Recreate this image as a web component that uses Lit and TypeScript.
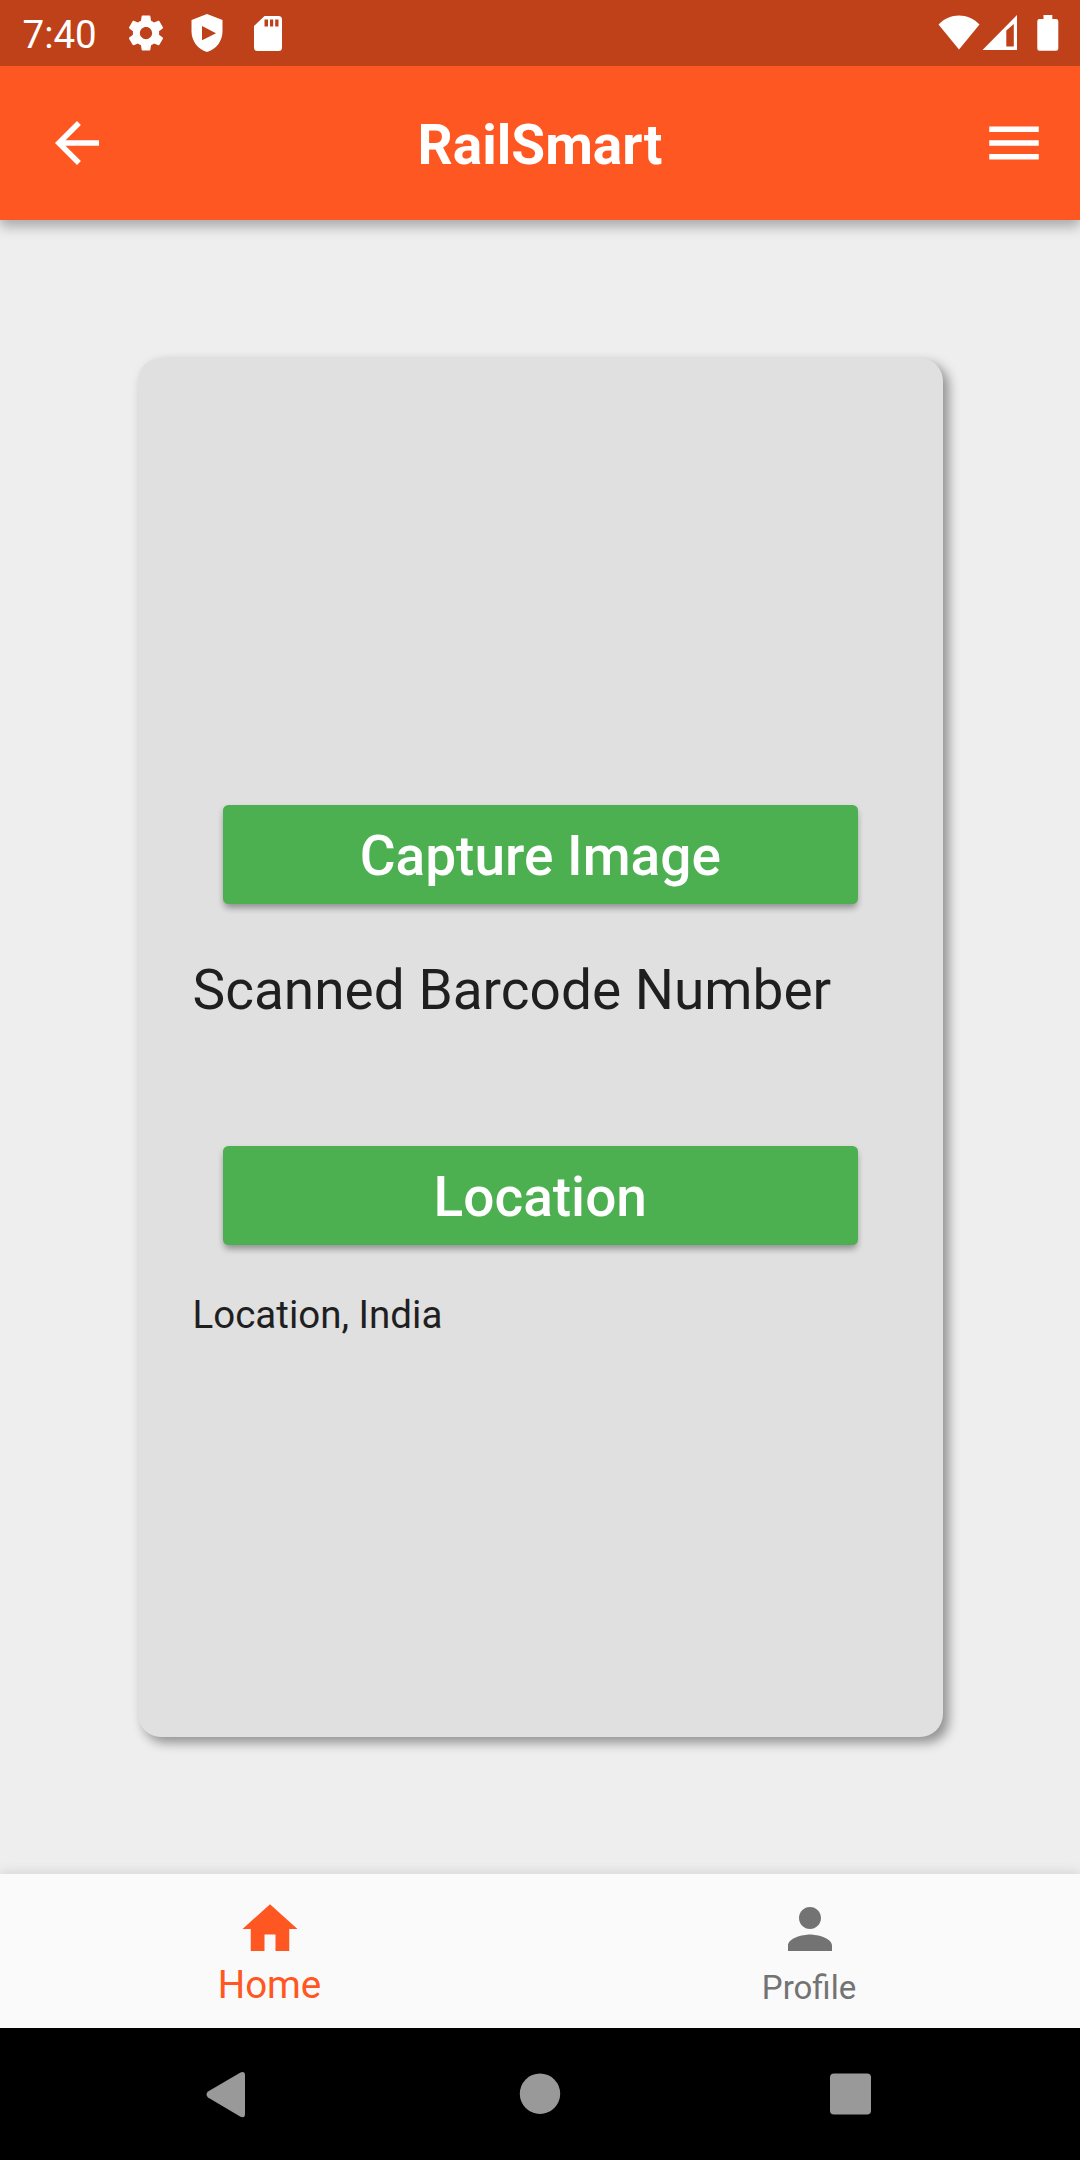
import { LitElement, html, css, svg } from "lit";
import { customElement } from "lit/decorators.js";

const gear = svg`<path d="M19.43 12.98c.04-.32.07-.64.07-.98s-.03-.66-.07-.98l2.11-1.65c.19-.15.24-.42.12-.64l-2-3.46c-.12-.22-.39-.3-.61-.22l-2.49 1c-.52-.4-1.08-.73-1.69-.98l-.38-2.65C14.46 2.18 14.25 2 14 2h-4c-.25 0-.46.18-.49.42l-.38 2.65c-.61.25-1.17.59-1.69.98l-2.49-1c-.23-.09-.49 0-.61.22l-2 3.46c-.13.22-.07.49.12.64l2.11 1.65c-.04.32-.07.65-.07.98s.03.66.07.98l-2.11 1.65c-.19.15-.24.42-.12.64l2 3.46c.12.22.39.3.61.22l2.49-1c.52.4 1.08.73 1.69.98l.38 2.65c.03.24.24.42.49.42h4c.25 0 .46-.18.49-.42l.38-2.65c.61-.25 1.17-.59 1.69-.98l2.49 1c.23.09.49 0 .61-.22l2-3.46c.12-.22.07-.49-.12-.64l-2.11-1.65zM12 15.5c-1.93 0-3.5-1.57-3.5-3.5s1.57-3.5 3.5-3.5 3.5 1.57 3.5 3.5-1.57 3.5-3.5 3.5z"/>`;

@customElement("app-root")
export class AppRoot extends LitElement {
  static styles = css`
    :host {
      display: flex;
      flex-direction: column;
      width: 1080px;
      height: 2160px;
      overflow: hidden;
      background: #eeeeee;
      font-family: Roboto, "Liberation Sans", sans-serif;
      color: #1f1f1f;
    }
    * { box-sizing: border-box; }
    svg { display: block; flex: none; }
    .status {
      height: 66px;
      flex: none;
      display: flex;
      align-items: center;
      background: #bf4119;
      color: #fff;
      fill: #fff;
      padding: 0 20px 0 22px;
      z-index: 2;
    }
    .time { width: 103px; font-size: 38.5px; line-height: 64px; padding: 4px 0 0 0.5px; }
    .shield { margin-left: 22px; }
    .sd { margin-left: 28px; }
    .wifi { margin-left: auto; }
    .battery { margin-left: 15px; }
    .bar {
      height: 154px;
      flex: none;
      display: grid;
      grid-template-columns: 66px 1fr 66px;
      align-items: center;
      padding: 0 33px 0 44px;
      background: #ff5722;
      color: #fff;
      fill: #fff;
      box-shadow: 0 7px 12px rgba(0, 0, 0, 0.22), 0 2px 14px rgba(0, 0, 0, 0.12);
      z-index: 1;
    }
    .title {
      margin: 0;
      font-size: 55px;
      font-weight: 700;
      line-height: 64px;
      text-align: center;
      padding: 3px 11px 0 0;
    }
    .body { flex: 1; padding: 138px 137.5px 137px 138px; display: flex; }
    .card {
      flex: 1;
      display: flex;
      flex-direction: column;
      justify-content: center;
      padding: 47px 54.5px 0;
      border-radius: 23px;
      background: #e0e0e0;
      box-shadow: 5.5px 5.5px 11px rgba(0, 0, 0, 0.38);
    }
    .button {
      height: 99px;
      margin: 0 30.5px;
      border: 0;
      border-radius: 5.5px;
      background: #4caf50;
      color: #fff;
      font: 500 55px/64px Roboto, "Liberation Sans", sans-serif;
      padding: 3px 0 0;
      box-shadow: 0 6px 7px -2px rgba(0, 0, 0, 0.24), 0 3px 6px rgba(0, 0, 0, 0.16);
    }
    .scanned { font-size: 55px; line-height: 64px; margin: 54px 0 124px; }
    .place { font-size: 38.5px; line-height: 45px; margin: 47px 0 0; }
    .tabs {
      height: 154px;
      flex: none;
      display: grid;
      grid-template-columns: 1fr 1fr;
      background: #fafafa;
      box-shadow: 0 -1px 12px rgba(0, 0, 0, 0.12);
    }
    .tab { display: flex; flex-direction: column; align-items: center; padding-top: 22px; color: #737373; fill: #737373; }
    .tab.active { color: #ff5722; fill: #ff5722; }
    .label { font-size: 33px; line-height: 40px; padding: 6px 2px 0 0; }
    .active .label { font-size: 38.5px; line-height: 45px; padding: 0 1px 0 0; }
    .nav {
      height: 132px;
      flex: none;
      display: flex;
      align-items: center;
      justify-content: space-between;
      padding: 0 196px;
      background: #000;
      fill: #999;
    }
  `;

  render() {
    return html`
      <header class="status">
        <span class="time">7:40</span>
        <svg width="42" height="42" viewBox="0 0 24 24">${gear}</svg>
        <svg class="shield" width="36" height="42" viewBox="0 0 36 42">
          <path fill-rule="evenodd" d="M18 2 33.500 8V19.500C33.500 29 27 37.500 18 40 9 37.500 2.500 29 2.500 19.500V8ZM13 14V28.300L27 21.200Z"/>
        </svg>
        <svg class="sd" width="30" height="42" viewBox="0 0 30 42">
          <path fill-rule="evenodd" d="M11.500 4H25.500Q29 4 29 7.500V35.500Q29 39 25.500 39H4.500Q1 39 1 35.500V14ZM11.500 7.500V14.500H15V7.500ZM17 7.500V14.500H20.200V7.500ZM22.200 7.500V14.500H25.500V7.500Z"/>
        </svg>
        <svg class="wifi" width="42" height="42" viewBox="0 0 42 42"><path d="M.5 12.500C12 .4 30 .4 41.500 12.500L21 37.500Z"/></svg>
        <svg width="41" height="42" viewBox="0 0 41 42">
          <path fill-rule="evenodd" d="M2.500 38 37 3V38ZM26.300 18.500V34.500H33.800V12Z"/>
        </svg>
        <svg class="battery" width="24" height="42" viewBox="0 0 24 42">
          <path d="M7.500 3H16.300V7H20Q22.300 7 22.300 9.300V36.500Q22.300 38.800 20 38.800H3.500Q1.300 38.800 1.300 36.500V9.300Q1.300 7 3.500 7H7.500Z"/>
        </svg>
      </header>
      <header class="bar">
        <svg width="66" height="66" viewBox="0 0 24 24"><path d="M20 11H7.830l5.590-5.590L12 4l-8 8 8 8 1.410-1.410L7.830 13H20v-2z"/></svg>
        <h1 class="title">RailSmart</h1>
        <svg width="66" height="66" viewBox="0 0 24 24"><path d="M3 18h18v-2H3v2zm0-5h18v-2H3v2zm0-7v2h18V6H3z"/></svg>
      </header>
      <main class="body">
        <section class="card">
          <button class="button">Capture Image</button>
          <p class="scanned">Scanned Barcode Number</p>
          <button class="button">Location</button>
          <p class="place">Location, India</p>
        </section>
      </main>
      <nav class="tabs">
        <div class="tab active">
          <svg width="66" height="66" viewBox="0 0 24 24"><path d="M10 20v-6h4v6h5v-8h3L12 3 2 12h3v8z"/></svg>
          <span class="label">Home</span>
        </div>
        <div class="tab">
          <svg width="66" height="66" viewBox="0 0 24 24"><path d="M12 12c2.210 0 4-1.790 4-4s-1.790-4-4-4-4 1.790-4 4 1.790 4 4 4zm0 2c-2.670 0-8 1.340-8 4v2h16v-2c0-2.660-5.330-4-8-4z"/></svg>
          <span class="label">Profile</span>
        </div>
      </nav>
      <footer class="nav">
        <svg width="66" height="66" viewBox="0 0 66 66"><path d="M12 30.500 44.500 11.500Q49 9.800 49 14.500V53Q49 57.500 44.500 55.800L12 36.500Q9 33.500 12 30.500Z"/></svg>
        <svg width="66" height="66" viewBox="0 0 66 66"><circle cx="33" cy="32.700" r="20.200"/></svg>
        <svg width="66" height="66" viewBox="0 0 66 66"><rect x="12" y="12.500" width="41" height="41" rx="4"/></svg>
      </footer>
    `;
  }
}
